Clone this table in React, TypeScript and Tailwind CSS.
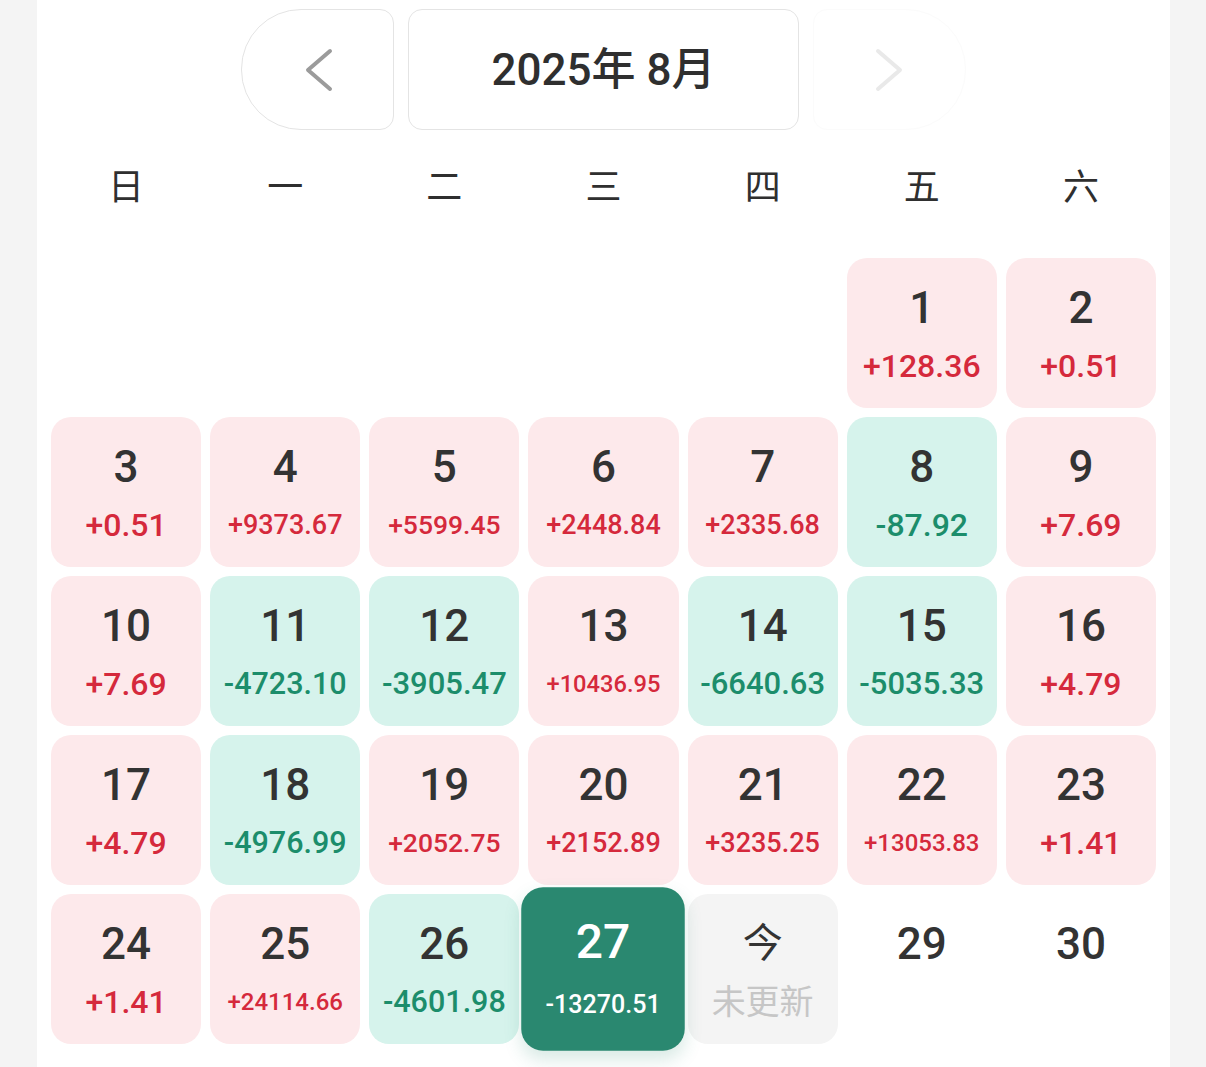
import React from "react";

type Day = {
  day: number;
  value?: string;
  size?: number;
  kind: "up" | "down" | "active" | "today" | "empty";
};

const days: Day[] = [
  { day: 1, value: "+128.36", size: 32, kind: "up" },
  { day: 2, value: "+0.51", size: 32, kind: "up" },
  { day: 3, value: "+0.51", size: 32, kind: "up" },
  { day: 4, value: "+9373.67", size: 27, kind: "up" },
  { day: 5, value: "+5599.45", size: 26.5, kind: "up" },
  { day: 6, value: "+2448.84", size: 27, kind: "up" },
  { day: 7, value: "+2335.68", size: 27, kind: "up" },
  { day: 8, value: "-87.92", size: 32, kind: "down" },
  { day: 9, value: "+7.69", size: 32, kind: "up" },
  { day: 10, value: "+7.69", size: 32, kind: "up" },
  { day: 11, value: "-4723.10", size: 30.5, kind: "down" },
  { day: 12, value: "-3905.47", size: 31, kind: "down" },
  { day: 13, value: "+10436.95", size: 23.7, kind: "up" },
  { day: 14, value: "-6640.63", size: 31, kind: "down" },
  { day: 15, value: "-5035.33", size: 31, kind: "down" },
  { day: 16, value: "+4.79", size: 32, kind: "up" },
  { day: 17, value: "+4.79", size: 32, kind: "up" },
  { day: 18, value: "-4976.99", size: 30.5, kind: "down" },
  { day: 19, value: "+2052.75", size: 26.5, kind: "up" },
  { day: 20, value: "+2152.89", size: 27, kind: "up" },
  { day: 21, value: "+3235.25", size: 27, kind: "up" },
  { day: 22, value: "+13053.83", size: 24, kind: "up" },
  { day: 23, value: "+1.41", size: 32, kind: "up" },
  { day: 24, value: "+1.41", size: 32, kind: "up" },
  { day: 25, value: "+24114.66", size: 24, kind: "up" },
  { day: 26, value: "-4601.98", size: 30.5, kind: "down" },
  { day: 27, value: "-13270.51", size: 23, kind: "active" },
  { day: 28, kind: "today" },
  { day: 29, kind: "empty" },
  { day: 30, kind: "empty" },
];

const weekdays = ["日", "一", "二", "三", "四", "五", "六"];

function Chevron({ dir, color }: { dir: "left" | "right"; color: string }) {
  return (
    <svg width="30" height="44" viewBox="0 0 30 44" fill="none">
      <polyline
        points={dir === "left" ? "26,3 4,22 26,41" : "4,3 26,22 4,41"}
        stroke={color}
        strokeWidth="4"
        strokeLinecap="round"
        strokeLinejoin="round"
      />
    </svg>
  );
}

function DayCell({ d }: { d: Day }) {
  if (d.kind === "today") {
    return (
      <div className="flex h-[150px] flex-col items-center rounded-[20px] bg-[#f4f4f4] pt-[28px]">
        <div className="h-[44px] text-[40px] leading-[44px] text-[#333]">今</div>
        <div className="mt-[20px] h-[32px] text-[34px] leading-[32px] text-[#c6c6c6]">未更新</div>
      </div>
    );
  }
  if (d.kind === "empty") {
    return (
      <div className="flex h-[150px] flex-col items-center pt-[28px]">
        <div className="h-[44px] text-[44px] font-medium leading-[44px] text-[#333]">{d.day}</div>
      </div>
    );
  }
  const box =
    d.kind === "up"
      ? "bg-[#fde9eb]"
      : d.kind === "down"
        ? "bg-[#d6f3ec]"
        : "bg-[#2a8870] scale-[1.09] shadow-[0_8px_16px_rgba(42,136,112,0.18)] z-10";
  const num = d.kind === "active" ? "text-white" : "text-[#333]";
  const val =
    d.kind === "up" ? "text-[#d5293c]" : d.kind === "down" ? "text-[#1c8d6b]" : "text-white";
  return (
    <div className={`relative flex h-[150px] flex-col items-center rounded-[20px] pt-[28px] ${box}`}>
      <div className={`h-[44px] text-[44px] font-medium leading-[44px] ${num}`}>{d.day}</div>
      <div className={`mt-[20px] flex h-[32px] items-center font-medium ${val}`}>
        <span style={{ fontSize: d.size, lineHeight: "32px" }}>{d.value}</span>
      </div>
    </div>
  );
}

export default function App() {
  return (
    <div className="min-h-screen bg-[#f4f4f4] font-['Roboto','Noto_Sans_CJK_SC',sans-serif]">
      <div className="ml-[37px] min-h-screen w-[1133px] bg-white px-[14px] pt-[9px]">
        <div className="flex h-[121px] justify-center gap-[14px]">
          <button className="flex w-[153px] items-center justify-center rounded-l-[60px] rounded-r-[14px] border border-[#e4e4e4] bg-white pl-[2px]">
            <Chevron dir="left" color="#9b9b9b" />
          </button>
          <div className="flex w-[391px] items-center justify-center rounded-[14px] border border-[#e4e4e4] text-[44px] font-medium text-[#2f2f2f]">
            2025年 8月
          </div>
          <button className="flex w-[153px] items-center justify-center rounded-r-[60px] rounded-l-[14px] border border-[#fbfbfb] bg-white pr-[2px]">
            <Chevron dir="right" color="#e9e9e9" />
          </button>
        </div>

        <div className="mt-[31px] grid h-[50px] grid-cols-7 gap-[9px]">
          {weekdays.map((w) => (
            <div key={w} className="flex items-center justify-center text-[36px] text-[#2f2f2f]">
              {w}
            </div>
          ))}
        </div>

        <div className="mt-[47px] grid grid-cols-7 gap-[9px]">
          {Array.from({ length: 5 }).map((_, i) => (
            <div key={`pad-${i}`} className="h-[150px]" />
          ))}
          {days.map((d) => (
            <DayCell key={d.day} d={d} />
          ))}
        </div>
      </div>
    </div>
  );
}
